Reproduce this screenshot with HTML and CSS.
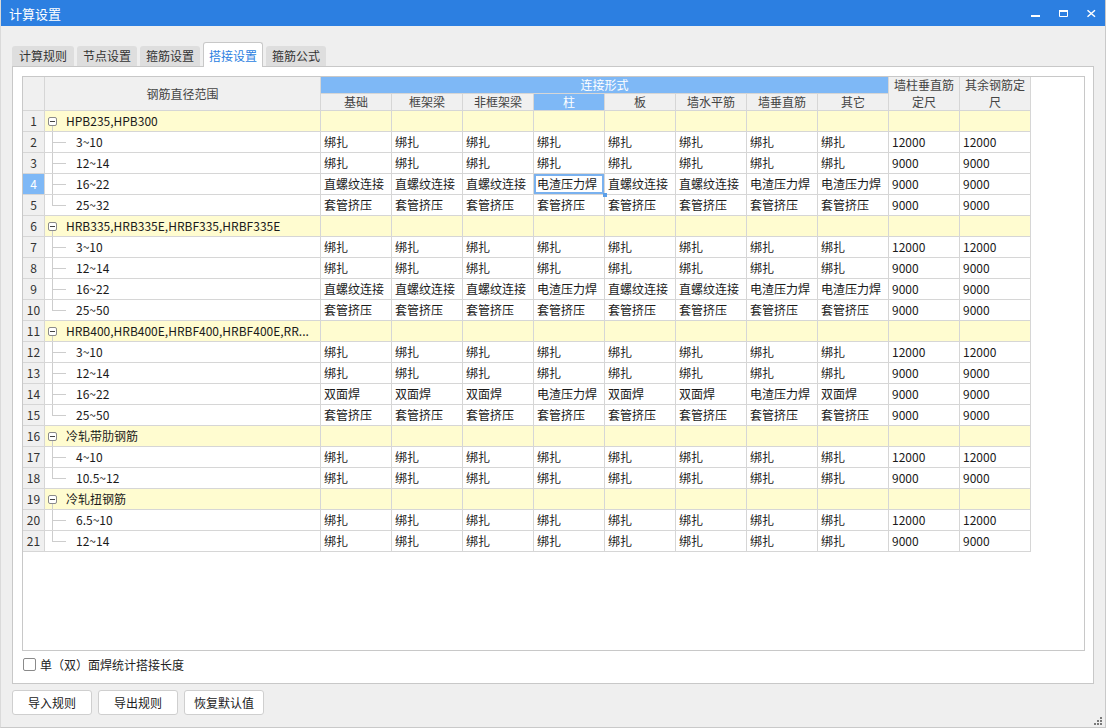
FILE: index.html
```html
<!DOCTYPE html>
<html lang="zh-CN">
<head>
<meta charset="utf-8">
<title>计算设置</title>
<link rel="stylesheet" href="styles.css">
</head>
<body>
<div class="window">
  <div class="titlebar">
    <span class="title">计算设置</span>
    <div class="controls">
      <span class="ctl"><svg width="10" height="10" viewBox="0 0 10 10"><rect x="1" y="7" width="9" height="2" fill="#fff"/></svg></span>
      <span class="ctl"><svg width="10" height="10" viewBox="0 0 10 10"><rect x="1" y="2" width="9" height="2" fill="#fff"/><path d="M1.5 3.5v5h8v-5" fill="none" stroke="#fff" stroke-width="1"/></svg></span>
      <span class="ctl"><svg width="10" height="10" viewBox="0 0 10 10"><path d="M1.5 2.2l7.5 6.6M9 2.2l-7.5 6.6" stroke="#fff" stroke-width="1.5" fill="none"/></svg></span>
    </div>
  </div>
  <div class="content">
    <div class="tabs">
      <div class="tab first">计算规则</div>
      <div class="tab">节点设置</div>
      <div class="tab">箍筋设置</div>
      <div class="tab active">搭接设置</div>
      <div class="tab">箍筋公式</div>
    </div>
    <div class="panel">
      <div class="gridbox">
        <div class="grid">
          <div class="h h2"></div>
          <div class="h h2">钢筋直径范围</div>
          <div class="h blue span8">连接形式</div>
          <div class="h h2 wrap">墙柱垂直筋定尺</div>
          <div class="h h2 wrap">其余钢筋定尺</div>
          <div class="h">基础</div>
          <div class="h">框架梁</div>
          <div class="h">非框架梁</div>
          <div class="h blue">柱</div>
          <div class="h">板</div>
          <div class="h">墙水平筋</div>
          <div class="h">墙垂直筋</div>
          <div class="h">其它</div>

          <div class="r g"><div class="n">1</div><div class="t gp"><i class="box"></i><span>HPB235,HPB300</span></div><div></div><div></div><div></div><div></div><div></div><div></div><div></div><div></div><div></div><div></div></div>
          <div class="r"><div class="n">2</div><div class="t k">3~10</div><div>绑扎</div><div>绑扎</div><div>绑扎</div><div>绑扎</div><div>绑扎</div><div>绑扎</div><div>绑扎</div><div>绑扎</div><div>12000</div><div>12000</div></div>
          <div class="r"><div class="n">3</div><div class="t k">12~14</div><div>绑扎</div><div>绑扎</div><div>绑扎</div><div>绑扎</div><div>绑扎</div><div>绑扎</div><div>绑扎</div><div>绑扎</div><div>9000</div><div>9000</div></div>
          <div class="r"><div class="n sel">4</div><div class="t k">16~22</div><div>直螺纹连接</div><div>直螺纹连接</div><div>直螺纹连接</div><div class="cur">电渣压力焊</div><div>直螺纹连接</div><div>直螺纹连接</div><div>电渣压力焊</div><div>电渣压力焊</div><div>9000</div><div>9000</div></div>
          <div class="r"><div class="n">5</div><div class="t k last">25~32</div><div>套管挤压</div><div>套管挤压</div><div>套管挤压</div><div>套管挤压</div><div>套管挤压</div><div>套管挤压</div><div>套管挤压</div><div>套管挤压</div><div>9000</div><div>9000</div></div>

          <div class="r g"><div class="n">6</div><div class="t gp"><i class="box"></i><span>HRB335,HRB335E,HRBF335,HRBF335E</span></div><div></div><div></div><div></div><div></div><div></div><div></div><div></div><div></div><div></div><div></div></div>
          <div class="r"><div class="n">7</div><div class="t k">3~10</div><div>绑扎</div><div>绑扎</div><div>绑扎</div><div>绑扎</div><div>绑扎</div><div>绑扎</div><div>绑扎</div><div>绑扎</div><div>12000</div><div>12000</div></div>
          <div class="r"><div class="n">8</div><div class="t k">12~14</div><div>绑扎</div><div>绑扎</div><div>绑扎</div><div>绑扎</div><div>绑扎</div><div>绑扎</div><div>绑扎</div><div>绑扎</div><div>9000</div><div>9000</div></div>
          <div class="r"><div class="n">9</div><div class="t k">16~22</div><div>直螺纹连接</div><div>直螺纹连接</div><div>直螺纹连接</div><div>电渣压力焊</div><div>直螺纹连接</div><div>直螺纹连接</div><div>电渣压力焊</div><div>电渣压力焊</div><div>9000</div><div>9000</div></div>
          <div class="r"><div class="n">10</div><div class="t k last">25~50</div><div>套管挤压</div><div>套管挤压</div><div>套管挤压</div><div>套管挤压</div><div>套管挤压</div><div>套管挤压</div><div>套管挤压</div><div>套管挤压</div><div>9000</div><div>9000</div></div>

          <div class="r g"><div class="n">11</div><div class="t gp"><i class="box"></i><span>HRB400,HRB400E,HRBF400,HRBF400E,RR...</span></div><div></div><div></div><div></div><div></div><div></div><div></div><div></div><div></div><div></div><div></div></div>
          <div class="r"><div class="n">12</div><div class="t k">3~10</div><div>绑扎</div><div>绑扎</div><div>绑扎</div><div>绑扎</div><div>绑扎</div><div>绑扎</div><div>绑扎</div><div>绑扎</div><div>12000</div><div>12000</div></div>
          <div class="r"><div class="n">13</div><div class="t k">12~14</div><div>绑扎</div><div>绑扎</div><div>绑扎</div><div>绑扎</div><div>绑扎</div><div>绑扎</div><div>绑扎</div><div>绑扎</div><div>9000</div><div>9000</div></div>
          <div class="r"><div class="n">14</div><div class="t k">16~22</div><div>双面焊</div><div>双面焊</div><div>双面焊</div><div>电渣压力焊</div><div>双面焊</div><div>双面焊</div><div>电渣压力焊</div><div>双面焊</div><div>9000</div><div>9000</div></div>
          <div class="r"><div class="n">15</div><div class="t k last">25~50</div><div>套管挤压</div><div>套管挤压</div><div>套管挤压</div><div>套管挤压</div><div>套管挤压</div><div>套管挤压</div><div>套管挤压</div><div>套管挤压</div><div>9000</div><div>9000</div></div>

          <div class="r g"><div class="n">16</div><div class="t gp"><i class="box"></i><span>冷轧带肋钢筋</span></div><div></div><div></div><div></div><div></div><div></div><div></div><div></div><div></div><div></div><div></div></div>
          <div class="r"><div class="n">17</div><div class="t k">4~10</div><div>绑扎</div><div>绑扎</div><div>绑扎</div><div>绑扎</div><div>绑扎</div><div>绑扎</div><div>绑扎</div><div>绑扎</div><div>12000</div><div>12000</div></div>
          <div class="r"><div class="n">18</div><div class="t k last">10.5~12</div><div>绑扎</div><div>绑扎</div><div>绑扎</div><div>绑扎</div><div>绑扎</div><div>绑扎</div><div>绑扎</div><div>绑扎</div><div>9000</div><div>9000</div></div>

          <div class="r g"><div class="n">19</div><div class="t gp"><i class="box"></i><span>冷轧扭钢筋</span></div><div></div><div></div><div></div><div></div><div></div><div></div><div></div><div></div><div></div><div></div></div>
          <div class="r"><div class="n">20</div><div class="t k">6.5~10</div><div>绑扎</div><div>绑扎</div><div>绑扎</div><div>绑扎</div><div>绑扎</div><div>绑扎</div><div>绑扎</div><div>绑扎</div><div>12000</div><div>12000</div></div>
          <div class="r"><div class="n">21</div><div class="t k last">12~14</div><div>绑扎</div><div>绑扎</div><div>绑扎</div><div>绑扎</div><div>绑扎</div><div>绑扎</div><div>绑扎</div><div>绑扎</div><div>9000</div><div>9000</div></div>
        </div>
      </div>
      <label class="opt"><span class="chk"></span><span>单（双）面焊统计搭接长度</span></label>
    </div>
    <div class="btns">
      <button class="btn">导入规则</button>
      <button class="btn">导出规则</button>
      <button class="btn">恢复默认值</button>
    </div>
  </div>
  <svg class="grip" width="9" height="9" viewBox="0 0 9 9"><g fill="#7a7a7a"><rect x="7" y="1" width="2" height="2"/><rect x="4" y="4" width="2" height="2"/><rect x="7" y="4" width="2" height="2"/><rect x="1" y="7" width="2" height="2"/><rect x="4" y="7" width="2" height="2"/><rect x="7" y="7" width="2" height="2"/></g></svg>
</div>
</body>
</html>
```

FILE: styles.css
```css
* { box-sizing: border-box; }

html, body {
  margin: 0;
  padding: 0;
  background: #efefef;
}

body {
  font-family: "Noto Sans CJK SC", "Microsoft YaHei", "Noto Sans", sans-serif;
  font-size: 12px;
  color: #222;
}

.window {
  width: 1106px;
  height: 728px;
  display: flex;
  flex-direction: column;
  background: #efefef;
  border: 1px solid #c9c9c9;
  border-left-color: #dadada;
  border-top: 0;
  position: relative;
  overflow: hidden;
}

.titlebar {
  height: 26px;
  flex: none;
  background: #2c7fe1;
  color: #fff;
  display: flex;
  align-items: center;
  padding-left: 8px;
  font-size: 13px;
}

.controls {
  margin-left: auto;
  display: flex;
  height: 100%;
}

.ctl {
  width: 28px;
  display: flex;
  align-items: center;
  justify-content: center;
}

.content {
  flex: 1;
  display: flex;
  flex-direction: column;
  padding: 16px 11px 0 11px;
}

.tabs {
  display: flex;
  align-items: flex-end;
  height: 24px;
  gap: 3px;
}

.tab {
  height: 20px;
  line-height: 20px;
  padding: 0 6px;
  background: #dedede;
  border-radius: 3px 3px 0 0;
  color: #333;
}

.tab.first { padding: 0 7px; }

.tab.active {
  height: 25px;
  margin-bottom: -1px;
  padding: 2px 5px 0;
  line-height: 22px;
  background: #fff;
  border: 1px solid #c8c8c8;
  border-bottom: 0;
  color: #2c7fe1;
  position: relative;
  z-index: 1;
}

.panel {
  height: 618px;
  flex: none;
  background: #fff;
  border: 1px solid #c8c8c8;
  display: flex;
  flex-direction: column;
  padding: 9px 8px 0 9px;
}

.gridbox {
  height: 575px;
  flex: none;
  border: 1px solid #c8c8c8;
  background: #fff;
}

.grid {
  display: grid;
  grid-template-columns: 22px 276px repeat(10, 71px);
  grid-template-rows: 17px 17px;
  grid-auto-rows: 21px;
}

.grid > div,
.r > div {
  border-right: 1px solid #d6d6d6;
  border-bottom: 1px solid #d6d6d6;
  white-space: nowrap;
}

.r { display: contents; }

.r > div {
  padding-left: 3px;
  line-height: 20px;
  color: #1a1a1a;
}

.h {
  background: #f0f0f0;
  color: #444;
  text-align: center;
  line-height: 16px;
}

.h2 {
  grid-row: span 2;
  display: flex;
  align-items: center;
  justify-content: center;
}

.grid > .wrap {
  white-space: normal;
  line-height: 16.5px;
  display: block;
}

.blue {
  background: #7eb8f6;
  color: #fff;
}

.span8 { grid-column: span 8; }

.r > .n {
  background: #f0f0f0;
  text-align: center;
  padding-left: 0;
  color: #333;
}

.r > .n.sel {
  background: #7eb8f6;
  color: #fff;
}

.g > div { background-color: #fffcd0; }

.r > .t.k {
  padding-left: 31px;
  background-image: linear-gradient(#cdcdcd, #cdcdcd), linear-gradient(#cdcdcd, #cdcdcd);
  background-repeat: no-repeat;
  background-position: 7px 0, 7px 10px;
  background-size: 1px 100%, 14px 1px;
}

.r > .t.k.last {
  background-size: 1px 11px, 14px 1px;
}

.r > .t.gp {
  display: flex;
  align-items: center;
  padding-left: 3px;
  background-image: linear-gradient(#cdcdcd, #cdcdcd);
  background-repeat: no-repeat;
  background-position: 7px 15px;
  background-size: 1px 6px;
}

.box {
  flex: none;
  width: 9px;
  height: 9px;
  margin-right: 9px;
  border: 1px solid #8a8a8a;
  border-radius: 2px;
  background: linear-gradient(#444, #444) center / 5px 1px no-repeat, #fff;
}

.r > .cur {
  position: relative;
  z-index: 1;
  box-shadow: inset 0 0 0 2px #79b1ef;
}

.r > .cur::after {
  content: "";
  position: absolute;
  right: -3px;
  bottom: -3px;
  width: 4px;
  height: 4px;
  background: #5c9fe8;
}

.opt {
  display: flex;
  align-items: center;
  gap: 4px;
  margin-top: 7px;
  margin-left: 1px;
  height: 13px;
  color: #222;
}

.chk {
  width: 13px;
  height: 13px;
  border: 1px solid #8a8a8a;
  border-radius: 2px;
  background: #fff;
}

.btns {
  display: flex;
  gap: 6px;
  margin-top: 6px;
}

.btn {
  width: 80px;
  height: 25px;
  padding: 0;
  font: inherit;
  color: #222;
  background: #fff;
  border: 1px solid #cfcfcf;
  border-radius: 3px;
  text-align: center;
}

.grip {
  position: absolute;
  right: 3px;
  bottom: 2px;
}
```
